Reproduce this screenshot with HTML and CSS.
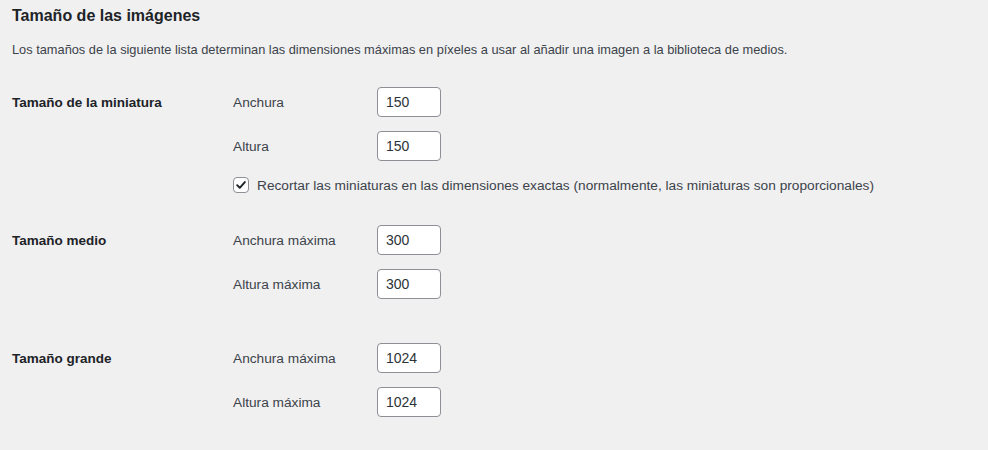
FILE: index.html
```html
<!DOCTYPE html>
<html lang="es">
<head>
  <meta charset="UTF-8">
  <title>Ajustes de medios</title>
  <link rel="stylesheet" href="styles.css">
</head>
<body>
  <div class="wrap">
    <h2 class="title">Tamaño de las imágenes</h2>
    <p class="intro">Los tamaños de la siguiente lista determinan las dimensiones máximas en píxeles a usar al añadir una imagen a la biblioteca de medios.</p>

    <div class="size-group first">
      <div class="group-label">Tamaño de la miniatura</div>
      <label class="field-label" for="thumb_w">Anchura</label>
      <input class="small-text" id="thumb_w" type="text" value="150">
      <label class="field-label" for="thumb_h">Altura</label>
      <input class="small-text" id="thumb_h" type="text" value="150">
      <label class="crop-row">
        <span class="checkbox">
          <svg viewBox="0 0 16 16" width="16" height="16"><path d="M3.6 8.2l3 3 5.8-6.6" fill="none" stroke="#1d2327" stroke-width="2.2" stroke-linecap="round" stroke-linejoin="round"/></svg>
        </span>
        Recortar las miniaturas en las dimensiones exactas (normalmente, las miniaturas son proporcionales)
      </label>
    </div>

    <div class="size-group medium">
      <div class="group-label">Tamaño medio</div>
      <label class="field-label" for="med_w">Anchura máxima</label>
      <input class="small-text" id="med_w" type="text" value="300">
      <label class="field-label" for="med_h">Altura máxima</label>
      <input class="small-text" id="med_h" type="text" value="300">
    </div>

    <div class="size-group large">
      <div class="group-label">Tamaño grande</div>
      <label class="field-label" for="large_w">Anchura máxima</label>
      <input class="small-text" id="large_w" type="text" value="1024">
      <label class="field-label" for="large_h">Altura máxima</label>
      <input class="small-text" id="large_h" type="text" value="1024">
    </div>
  </div>
</body>
</html>
```

FILE: styles.css
```css
body {
  background-color: #f0f0f1;
  color: #3c434a;
  font-family: "Segoe UI", "Liberation Sans", sans-serif;
  font-size: 13.7px;
  margin: 0;
  padding: 0;
}

.wrap {
  padding: 4px 12px 0;
}

.title {
  color: #1d2327;
  font-size: 16px;
  font-weight: 600;
  line-height: 24px;
  margin: 0;
}

.intro {
  color: #3c434a;
  font-size: 12.8px;
  line-height: 18px;
  margin: 13px 0 28px;
}

.size-group {
  display: grid;
  grid-template-columns: 221px 144px 64px;
  row-gap: 14px;
  align-items: center;
}

.size-group.medium {
  margin-top: 30px;
}

.size-group.large {
  margin-top: 44px;
}

.group-label {
  grid-column: 1;
  grid-row: 1;
  color: #1d2327;
  font-size: 13.5px;
  font-weight: 600;
}

.field-label {
  grid-column: 2;
}

.small-text {
  grid-column: 3;
  box-sizing: border-box;
  width: 64px;
  height: 30px;
  padding: 0 8px;
  border: 1px solid #8c8f94;
  border-radius: 4px;
  background: #fff;
  color: #2c3338;
  font-family: inherit;
  font-size: 14px;
}

.crop-row {
  grid-column: 2 / 5;
  display: flex;
  align-items: center;
  gap: 8px;
  height: 20px;
  white-space: nowrap;
}

.checkbox {
  box-sizing: border-box;
  width: 16px;
  height: 16px;
  border: 1px solid #8c8f94;
  border-radius: 4px;
  background: #fff;
  display: flex;
  align-items: center;
  justify-content: center;
}

.checkbox svg {
  display: block;
  width: 14px;
  height: 14px;
}
```
